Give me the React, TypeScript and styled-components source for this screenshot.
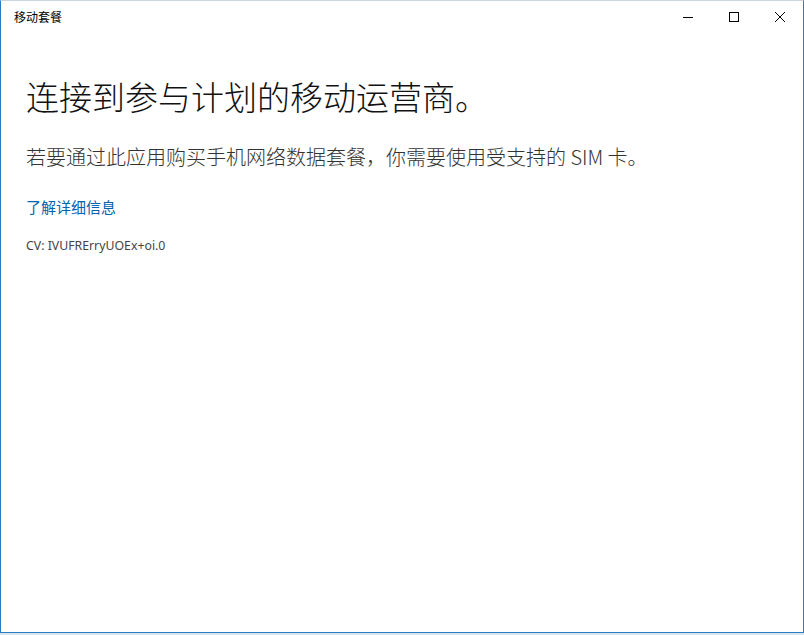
import styled, { createGlobalStyle } from "styled-components";

const GlobalStyle = createGlobalStyle`
  html, body {
    margin: 0;
    padding: 0;
    background: #d9e6f2;
  }
  body {
    font-family: "Noto Sans CJK SC", "Noto Sans", sans-serif;
  }
`;

const Window = styled.div`
  box-sizing: border-box;
  width: 804px;
  height: 633px;
  background: #ffffff;
  border: 1px solid #2b7cc4;
  border-top-color: #c9d6e2;
  display: flex;
  flex-direction: column;
`;

const TitleBar = styled.div`
  height: 31px;
  display: flex;
  align-items: center;
  flex-shrink: 0;
`;

const Title = styled.span`
  flex: 1;
  padding-left: 13px;
  font-size: 12px;
  color: #000;
  line-height: 1;
`;

const CaptionButton = styled.button`
  width: 46px;
  height: 31px;
  border: none;
  background: transparent;
  padding: 0;
  display: flex;
  align-items: center;
  justify-content: center;
  color: #000;
`;

const Content = styled.div`
  padding: 42px 25px 0;
  display: flex;
  flex-direction: column;
  align-items: flex-start;
`;

const Heading = styled.h1`
  margin: 0;
  font-size: 33px;
  font-weight: 300;
  line-height: 44px;
  color: #111;
`;

const Body = styled.p`
  margin: 25px 0 0;
  font-size: 20px;
  font-weight: 300;
  line-height: 28px;
  color: #333;
`;

const MoreLink = styled.a`
  margin-top: 26px;
  font-size: 15px;
  line-height: 20px;
  color: #0063b1;
  text-decoration: none;
`;

const Version = styled.div`
  margin-top: 21px;
  font-family: "Noto Sans", sans-serif;
  font-size: 12.3px;
  line-height: 16px;
  color: #444;
`;

export default function App() {
  return (
    <>
      <GlobalStyle />
      <Window>
        <TitleBar>
          <Title>移动套餐</Title>
          <CaptionButton aria-label="最小化">
            <svg width="10" height="10" viewBox="0 0 10 10">
              <path d="M0 5.5h10" stroke="#000" strokeWidth="1" />
            </svg>
          </CaptionButton>
          <CaptionButton aria-label="最大化">
            <svg width="10" height="10" viewBox="0 0 10 10">
              <rect x="0.5" y="0.5" width="9" height="9" fill="none" stroke="#000" strokeWidth="1" />
            </svg>
          </CaptionButton>
          <CaptionButton aria-label="关闭">
            <svg width="10" height="10" viewBox="0 0 10 10">
              <path d="M0 0L10 10M10 0L0 10" stroke="#000" strokeWidth="1" />
            </svg>
          </CaptionButton>
        </TitleBar>
        <Content>
          <Heading>连接到参与计划的移动运营商。</Heading>
          <Body>若要通过此应用购买手机网络数据套餐，你需要使用受支持的 SIM 卡。</Body>
          <MoreLink href="#">了解详细信息</MoreLink>
          <Version>CV: IVUFRErryUOEx+oi.0</Version>
        </Content>
      </Window>
    </>
  );
}
